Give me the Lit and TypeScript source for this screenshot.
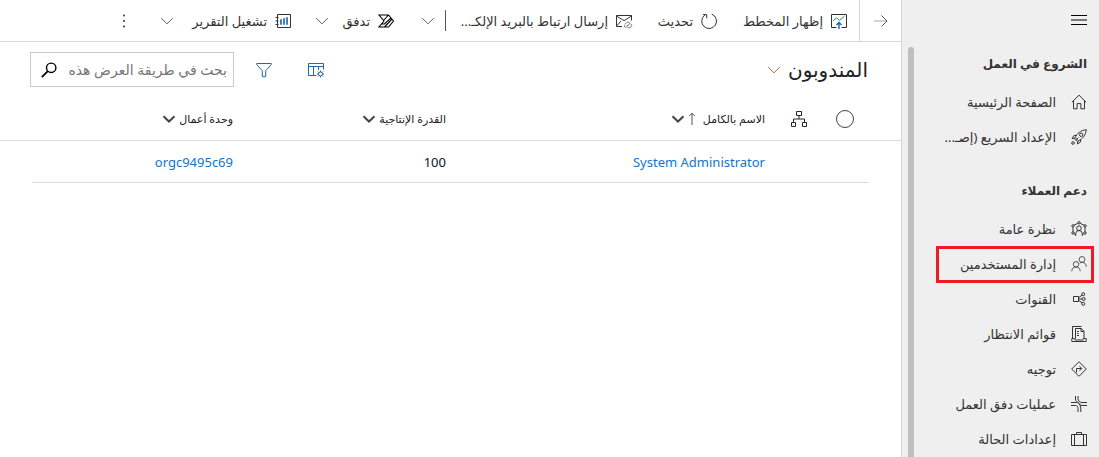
import { LitElement, html, css, svg, nothing } from "lit";
import { customElement } from "lit/decorators.js";

const glyphs: Record<string, unknown> = {
  menu: svg`<path d="M0 3.5h16M0 8h16M0 12.500h16" stroke="#000"/>`,
  home: svg`<path d="M.9 8.2 8 1.2l7.1 7M2.5 6.8v8h3.6V9.6h3.800v5.200h3.600v-8"/>`,
  rocket: svg`<path d="M4.2 8.6C6 4.4 9.600 1.300 15.300.7c-.6 5.700-3.700 9.300-7.900 11.100zM5.300 6.500H3L1 9.600l3.200-.6M9.500 10.700V13l-3.100 2 .6-3.200M3.400 9.800l2.800 2.800"/><circle cx="10.200" cy="5.800" r="1.700"/><circle cx="2" cy="14" r="1.300"/><path d="m5.500 10.500 2-2"/>`,
  overview: svg`<circle cx="8" cy="7.200" r="2.300"/><path d="M4.700 15v-2.200a3.300 3.300 0 0 1 6.600 0V15M6.700 2.400 3 4.200M9.300 2.400 13 4.200M2 6.200v4.600M14 6.200v4.600M3 12.600l1.500.8M13 12.600l-1.500.8"/><circle cx="8" cy="1.800" r="1.200"/><circle cx="2" cy="4.900" r="1.200"/><circle cx="14" cy="4.900" r="1.200"/><circle cx="2" cy="12" r="1.200"/><circle cx="14" cy="12" r="1.200"/>`,
  users: svg`<g stroke="#555"><circle cx="11" cy="3.500" r="2.900"/><circle cx="5" cy="8.300" r="2.700"/><path d="M.8 15.300c0-2.700 1.600-4.300 4.200-4.300s4.200 1.600 4.200 4.300M8.700 7.200c.7-.6 1.500-.8 2.300-.8 2.600 0 4.300 1.600 4.300 4.300"/></g>`,
  channels: svg`<path d="M2.500 5.500h5v5h-5zM7.500 8h3.700M7.500 6.700l3.600-2.500M7.500 9.300l3.600 2.500"/><circle cx="12.200" cy="3.200" r="1.500"/><circle cx="12.700" cy="8" r="1.500"/><circle cx="12.200" cy="12.800" r="1.500"/>`,
  queues: svg`<path d="M4.500 12.500V2.500h5.800l2.700 2.700v7.300M10 2.500v3h3M10.500.5h-9v12M.8 12.500h2.700l.6 1.500h7.800l.6-1.500h2.700v3H.8zM6 5.500h2M6 7.500h1.500M6 9.500h2"/>`,
  routing: svg`<path d="m8 .7 7.300 7.300L8 15.300.7 8zM5.500 11.500v-4h4.800M8.500 5.200l2.300 2.300-2.300 2.300"/>`,
  flows: svg`<path d="M0 6.500h5.500c2 0 3 1 3.500 2.500l.8 3v4M0 9.500h4.500c1.500 0 2.500 1 2.500 3V16M4.500 0v3c0 2 1 3 3 3.500M7 0v2.500c0 2 1.500 4 4 4h5M16 9.500h-4c-1.500 0-3-.6-4-1.500"/>`,
  cases: svg`<path d="M.5 3.500h15v11H.5zM5.500 3.500v-2h5v2M3.500 3.500v11M12.500 3.500v11"/>`,
  back: svg`<path d="M1 8h12.500" stroke="#aaa"/><path d="M8.500 2.500 14 8l-5.500 5.500" stroke="#555"/>`,
  chart: svg`<path d="M5.500 14.500h-5v-13h15v13h-5" stroke="#333"/><path d="m2 8 3.500-3 3 2.500L13.500 3" stroke="#1f9d55"/><path d="M8 16V9.500M5.500 12 8 9.500l2.500 2.500" stroke="#1c64b0" stroke-width="1.400"/>`,
  refresh: svg`<path d="M10.800 1.200a7.400 7.400 0 1 1-7 .9M2 1.600h3.700v3.700"/>`,
  mail: svg`<path d="M6 13.500H.5v-11h15v5M.5 3 8 7.700 15.500 3M.5 13 5 8"/><path d="m9 11.500 1.500-1.800c1-1.100 3.300-.6 3 1.100l-2 2.200M14.500 11c2 .5 1.300 2.300.5 3-1 1-2.800 1-3.500.2M8.500 12.300c-.7 1 .3 2.400 1.700 1.700l2-2" stroke="#777"/>`,
  flow: svg`<path d="M1 2h9.500l5 6-5 6H1l5-6zM5.500 7.500l5-5.500M3.500 11h3L13 4.900M6.500 14l7.500-8" stroke="#000" stroke-width="1.100"/>`,
  report: svg`<path d="M2.500 1.500h13v13h-13zM.5 4.500h3M.5 8h3M.5 11.500h3" stroke="#333"/><path d="M5.500 6.500h1v5h-1zM8.500 5.500h1v6h-1zM11.500 4.500h1v7h-1z" stroke="#3f83b8"/>`,
  more: svg`<g fill="#333" stroke="none"><circle cx="8" cy="2.500" r="1"/><circle cx="8" cy="8" r="1"/><circle cx="8" cy="13.500" r="1"/></g>`,
  down: svg`<path d="m2.200 5.200 5.800 5.600 5.800-5.600" stroke="#666"/>`,
  accent: svg`<path d="m2.200 5.200 5.800 5.600 5.800-5.600" stroke="#a5683f"/>`,
  bold: svg`<path d="m2.500 5.200 5.500 5.300 5.500-5.300" stroke="#444" stroke-width="2"/>`,
  up: svg`<path d="M8 14V2M5.200 5 8 2.300 10.800 5" stroke="#555"/>`,
  columns: svg`<path d="M8.500 13.500h-8v-12h15v6M.5 4.500h15M5.500 4.500v9M10.500 4.500V8" stroke="#2266b0"/><circle cx="12.500" cy="12" r="2" stroke="#2266b0"/><path d="M12.500 8.500V10M12.500 14v1.500M9 12h1.500M14.500 12H16M10 9.500l1 1M14 13.500l1 1M15 9.500l-1 1M11 13.500l-1 1" stroke="#2266b0"/>`,
  filter: svg`<path d="M.7 1.500h14.600v1L9.700 8.700v6H6.300v-6L.7 2.500z" stroke="#2266b0"/>`,
  search: svg`<circle cx="10.200" cy="5.800" r="4.700" stroke="#000" stroke-width="1.400"/><path d="M6.800 9.200.8 15.200" stroke="#000" stroke-width="1.800"/>`,
  tree: svg`<path d="M5.500.5h5v4h-5zM.5 11.500h4v4h-4zM11.500 11.500h4v4h-4zM8 4.500V8M2.500 11.500V8h11v3.500" stroke="#33202f"/>`,
};

const icon = (name: string) =>
  html`<svg class="icon ${name}-icon" viewBox="0 0 16 16" width="16" height="16" aria-hidden="true">${glyphs[name]}</svg>`;

const iconStyles = css`
  .icon {
    display: block;
    flex: none;
    fill: none;
    stroke: #333;
    stroke-width: 1;
    overflow: visible;
  }
  button {
    font: inherit;
    color: inherit;
    background: none;
    border: 0;
    padding: 0;
    cursor: pointer;
  }
`;

const groups = [
  {
    title: "الشروع في العمل",
    items: [
      { icon: "home", label: "الصفحة الرئيسية" },
      { icon: "rocket", label: "الإعداد السريع (إصـ..." },
    ],
  },
  {
    title: "دعم العملاء",
    items: [
      { icon: "overview", label: "نظرة عامة" },
      { icon: "users", label: "إدارة المستخدمين", marked: true },
      { icon: "channels", label: "القنوات" },
      { icon: "queues", label: "قوائم الانتظار" },
      { icon: "routing", label: "توجيه" },
      { icon: "flows", label: "عمليات دفق العمل" },
      { icon: "cases", label: "إعدادات الحالة" },
    ],
  },
];

@customElement("side-nav")
class SideNav extends LitElement {
  static styles = [
    iconStyles,
    css`
      :host {
        display: flex;
        flex-direction: column;
        background: #efefef;
        border-left: 1px solid #d6d6d6;
        box-sizing: border-box;
        overflow: hidden;
      }
      .menu {
        align-self: flex-start;
        margin: 12px 12px 0;
      }
      .body {
        flex: 1;
        display: flex;
        justify-content: space-between;
        margin-top: 15px;
        padding: 0 5px 0 6px;
      }
      .thumb {
        width: 6px;
        margin-top: 4px;
        border-radius: 3px 3px 0 0;
        background: #bfbfbf;
      }
      .groups {
        width: 158px;
      }
      .group {
        margin-bottom: 16px;
      }
      .title {
        margin: 0;
        padding-right: 7px;
        font-size: 12px;
        font-weight: 600;
        line-height: 41px;
        color: #333;
      }
      .list {
        list-style: none;
        margin: 0;
        padding: 0;
      }
      .item {
        position: relative;
        display: flex;
        align-items: center;
        gap: 15px;
        height: 35px;
        padding: 0 7px 0 0;
        color: #333;
        text-decoration: none;
      }
      .label {
        white-space: nowrap;
      }
      .marked::after {
        content: "";
        position: absolute;
        inset: 0 0 -2px;
        border: 3px solid #ec1c24;
      }
    `,
  ];

  render() {
    return html`
      <button class="menu" aria-label="القائمة">${icon("menu")}</button>
      <div class="body">
        <nav class="groups">
          ${groups.map(
            (g) => html`<section class="group">
              <h2 class="title">${g.title}</h2>
              <ul class="list">
                ${g.items.map(
                  (i: any) => html`<li>
                    <a class="item ${i.marked ? "marked" : ""}" href="#">${icon(i.icon)}<span class="label">${i.label}</span></a>
                  </li>`
                )}
              </ul>
            </section>`
          )}
        </nav>
        <div class="thumb"></div>
      </div>
    `;
  }
}

@customElement("command-bar")
class CommandBar extends LitElement {
  static styles = [
    iconStyles,
    css`
      :host {
        display: flex;
        align-items: center;
        height: 41px;
        border-bottom: 1px solid #d6d6d6;
        color: #333;
      }
      .back {
        display: flex;
        align-self: stretch;
        align-items: center;
        padding: 0 12px 0 13px;
        border-left: 1px solid #d6d6d6;
      }
      .command {
        display: flex;
        align-items: center;
        gap: 8px;
        margin-right: 12px;
      }
      .label {
        white-space: nowrap;
        text-align: right;
      }
      .chart { width: 94px; }
      .refresh { width: 49px; }
      .mail { width: 146px; }
      .flow { width: 28px; }
      .report { width: 80px; }
      .divider {
        width: 1px;
        height: 21px;
        margin: 0 16px 0 9px;
        background: #555;
      }
      .toggle { margin-left: 14px; }
      .gap { margin: 0 12px 0 11px; }
      .more { margin-right: 16px; }
    `,
  ];

  render() {
    const command = (name: string, label: string) =>
      html`<button class="command">${icon(name)}<span class="label ${name}">${label}</span></button>`;
    return html`
      <button class="back" aria-label="رجوع">${icon("back")}</button>
      ${command("chart", "إظهار المخطط")} ${command("refresh", "تحديث")}
      ${command("mail", "إرسال ارتباط بالبريد الإلكـ...")}
      <span class="divider"></span>
      <button class="toggle" aria-label="المزيد من خيارات الإرسال">${icon("down")}</button>
      ${command("flow", "تدفق")}
      <button class="gap" aria-label="خيارات التدفق">${icon("down")}</button>
      ${command("report", "تشغيل التقرير")}
      <button class="gap" aria-label="خيارات التقرير">${icon("down")}</button>
      <button class="more" aria-label="المزيد من الأوامر">${icon("more")}</button>
    `;
  }
}

@customElement("user-grid")
class UserGrid extends LitElement {
  static styles = [
    iconStyles,
    css`
      :host {
        display: block;
      }
      .table {
        width: 100%;
        table-layout: fixed;
        border-collapse: separate;
        border-spacing: 0;
      }
      .edge { width: 32px; }
      .pick { width: 48px; }
      .kind { width: 42px; }
      .name { width: 319px; }
      .size { width: 213px; }
      .cell {
        height: 41px;
        padding: 0 14px;
        border-bottom: 1px solid #dcdcdc;
        text-align: right;
        font-weight: 400;
        line-height: 20px;
      }
      .head {
        height: 42px;
        font-size: 11px;
        font-weight: 500;
        color: #222;
      }
      .blank { padding: 0; }
      .clear { border-bottom-color: transparent; }
      .sort {
        display: flex;
        align-items: center;
        gap: 2px;
        white-space: nowrap;
      }
      .up-icon {
        margin: 0 1px 0 -4px;
      }
      .check {
        appearance: none;
        display: block;
        box-sizing: border-box;
        width: 18px;
        height: 18px;
        margin: 0 1px;
        border: 1px solid #444;
        border-radius: 50%;
      }
      .link {
        color: #0f75ce;
        text-decoration: none;
      }
    `,
  ];

  render() {
    const head = (label: string, sorted = false) =>
      html`<button class="sort">${label}${sorted ? icon("up") : nothing}${icon("bold")}</button>`;
    return html`
      <table class="table">
        <colgroup>
          <col class="edge" /><col class="pick" /><col class="kind" /><col class="name" /><col class="size" /><col /><col class="edge" />
        </colgroup>
        <thead>
          <tr>
            <td class="cell head blank"></td>
            <th class="cell head"><input class="check" type="checkbox" aria-label="تحديد الكل" /></th>
            <th class="cell head">${icon("tree")}</th>
            <th class="cell head">${head("الاسم بالكامل", true)}</th>
            <th class="cell head">${head("القدرة الإنتاجية")}</th>
            <th class="cell head">${head("وحدة أعمال")}</th>
            <td class="cell head blank"></td>
          </tr>
        </thead>
        <tbody>
          <tr>
            <td class="cell blank clear"></td>
            <td class="cell"></td>
            <td class="cell"></td>
            <td class="cell"><a class="link" href="#">System Administrator</a></td>
            <td class="cell">100</td>
            <td class="cell"><a class="link" href="#">orgc9495c69</a></td>
            <td class="cell blank clear"></td>
          </tr>
        </tbody>
      </table>
    `;
  }
}

@customElement("app-root")
class AppRoot extends LitElement {
  static styles = [
    iconStyles,
    css`
      :host {
        display: grid;
        grid-template-columns: 198px 1fr;
        min-height: 100vh;
        direction: rtl;
        background: #fff;
        color: #111;
        font-family: "Noto Sans", "DejaVu Sans", sans-serif;
        font-size: 13px;
      }
      .nav {
        height: 100vh;
      }
      .heading {
        display: flex;
        align-items: center;
        padding: 10px 33px 11px 30px;
      }
      .view {
        display: flex;
        align-items: center;
        gap: 6px;
        margin-left: auto;
      }
      .title {
        margin: 0;
        font-size: 20px;
        font-weight: 500;
        line-height: 28px;
        color: #222;
      }
      .tool {
        margin-left: 36px;
      }
      .filter { margin-left: 22px; }
      .search {
        display: flex;
        align-items: center;
        box-sizing: border-box;
        width: 204px;
        height: 35px;
        padding: 0 6px 0 10px;
        border: 1px solid #ccc;
      }
      .field {
        flex: 1;
        min-width: 0;
        padding: 0;
        border: 0;
        outline: 0;
        background: none;
        font: inherit;
        font-size: 14px;
      }
      .field::placeholder {
        color: #767676;
        opacity: 1;
      }
    `,
  ];

  render() {
    return html`
      <side-nav class="nav"></side-nav>
      <main>
        <command-bar></command-bar>
        <div class="heading">
          <button class="view"><h1 class="title">المندوبون</h1>${icon("accent")}</button>
          <button class="tool" aria-label="تحرير الأعمدة">${icon("columns")}</button>
          <button class="tool filter" aria-label="تصفية">${icon("filter")}</button>
          <div class="search">
            <input class="field" type="text" aria-label="بحث" placeholder="بحث في طريقة العرض هذه" />
            <button aria-label="بدء البحث">${icon("search")}</button>
          </div>
        </div>
        <user-grid></user-grid>
      </main>
    `;
  }
}
